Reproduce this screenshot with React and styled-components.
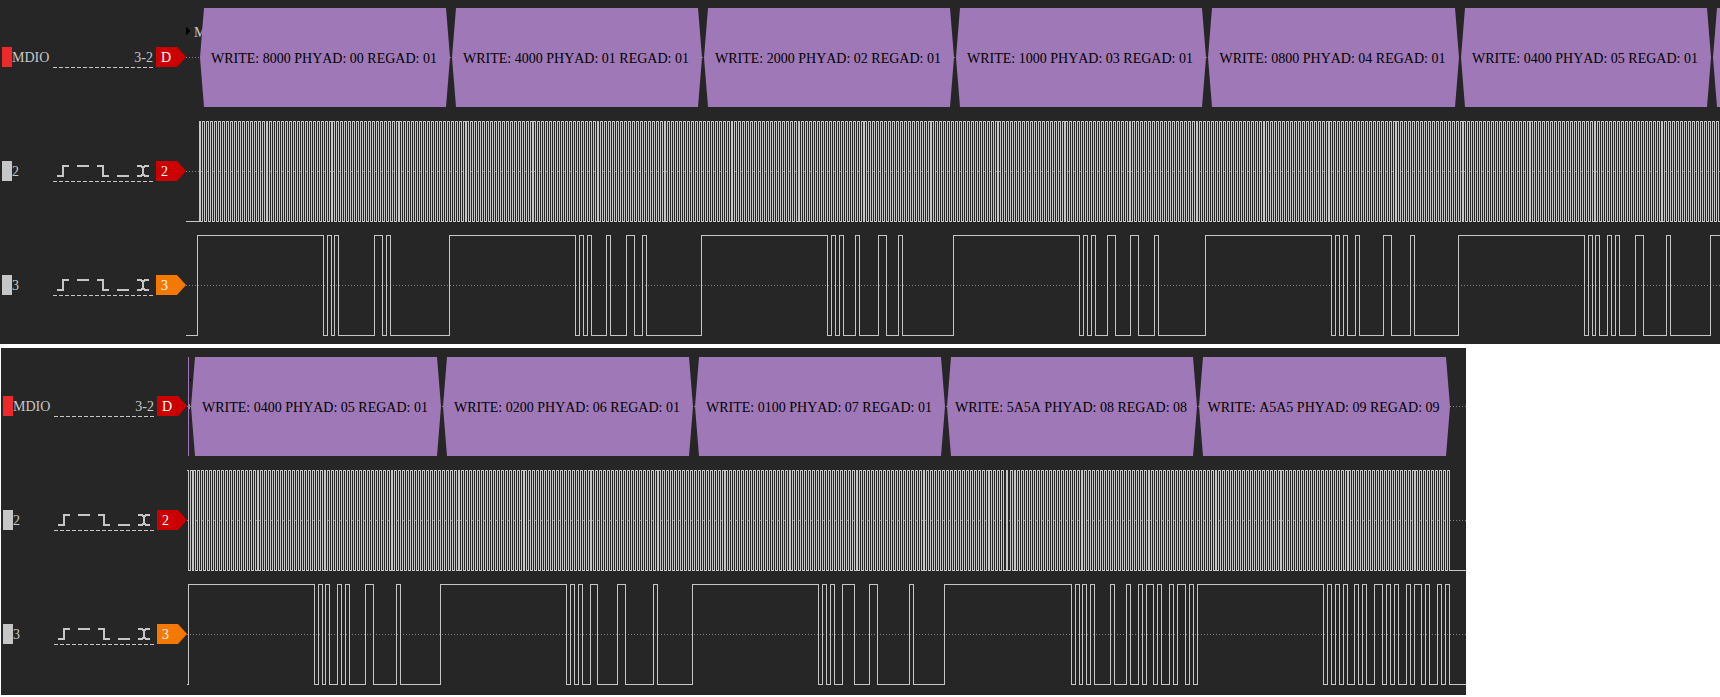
import React from "react";
import styled, { createGlobalStyle } from "styled-components";

const GlobalStyle = createGlobalStyle`
  body {
    margin: 0;
    background: #ffffff;
  }
`;

const LINE = "#c6c6c6";
const TOP = 7;
const BOTTOM = 107;
const MIDDLE = 57;

/* ---------- capture data ---------- */

// Clock edges are evenly spaced, slightly less than two pixels apart.
const EDGE_STEP = 1.97036;
const clockEdges = (start, count) =>
  Array.from({ length: count }, (_, i) => Math.floor(start + i * EDGE_STEP));

const captures = [
  {
    id: "first",
    decoder: {
      lead: 14,
      caption: "M",
      frames: [
        { text: "WRITE: 8000 PHYAD: 00 REGAD: 01", width: 252 },
        { text: "WRITE: 4000 PHYAD: 01 REGAD: 01", width: 252 },
        { text: "WRITE: 2000 PHYAD: 02 REGAD: 01", width: 252 },
        { text: "WRITE: 1000 PHYAD: 03 REGAD: 01", width: 252 },
        { text: "WRITE: 0800 PHYAD: 04 REGAD: 01", width: 253 },
        { text: "WRITE: 0400 PHYAD: 05 REGAD: 01", width: 252 },
        { text: "", width: 252 },
      ],
    },
    clock: { high: false, edges: clockEdges(13.012, 1400) },
    data: {
      high: false,
      edges: [
        11, 137, 141, 145, 148, 152, 188, 196, 200, 204, 263, 389, 393, 397,
        401, 405, 420, 424, 440, 448, 456, 460, 515, 641, 645, 649, 653, 657,
        669, 673, 692, 700, 712, 716, 767, 893, 897, 901, 905, 909, 921, 929,
        944, 952, 968, 972, 1019, 1145, 1149, 1153, 1157, 1161, 1169, 1173,
        1197, 1205, 1224, 1228, 1272, 1398, 1402, 1406, 1409, 1413, 1421,
        1425, 1429, 1433, 1449, 1457, 1480, 1484, 1524,
      ],
    },
  },
  {
    id: "second",
    decoder: {
      lead: 4,
      previousFrame: true,
      frames: [
        { text: "WRITE: 0400 PHYAD: 05 REGAD: 01", width: 252 },
        { text: "WRITE: 0200 PHYAD: 06 REGAD: 01", width: 252 },
        { text: "WRITE: 0100 PHYAD: 07 REGAD: 01", width: 252 },
        { text: "WRITE: 5A5A PHYAD: 08 REGAD: 08", width: 252 },
        { text: "WRITE: A5A5 PHYAD: 09 REGAD: 09", width: 253 },
      ],
    },
    clock: {
      high: true,
      edges: [
        1, 3,
        ...clockEdges(5.004, 413),
        819, 820, 823, 825,
        ...clockEdges(827.025, 222),
      ],
    },
    data: {
      high: false,
      edges: [
        1, 127, 131, 135, 138, 142, 150, 154, 158, 162, 178, 186, 209, 213,
        253, 379, 383, 387, 391, 395, 403, 410, 430, 438, 466, 470, 505, 631,
        635, 639, 643, 647, 655, 667, 682, 690, 722, 726, 757, 884, 888, 892,
        895, 899, 903, 907, 923, 927, 939, 943, 951, 955, 959, 966, 970, 974,
        982, 986, 990, 998, 1002, 1006, 1010, 1136, 1140, 1144, 1148, 1152,
        1156, 1160, 1167, 1171, 1175, 1179, 1187, 1195, 1199, 1203, 1207,
        1211, 1219, 1223, 1227, 1234, 1238, 1242, 1250, 1254, 1258, 1262,
      ],
    },
  },
];

/* ---------- layout ---------- */

const Page = styled.main`
  display: flex;
  flex-direction: column;
  gap: 4px;
  padding-bottom: 2px;
  font-family: "Liberation Serif", "Times New Roman", serif;
  font-size: 14px;
  line-height: 20px;
  font-kerning: none;
  color: ${LINE};
`;

const Capture = styled.section`
  background: #262626;
  padding: ${(p) => (p.$inset ? "1px 0 4px" : "0 0 2px")};
  margin: ${(p) => (p.$inset ? "0 254px 0 1px" : "0")};
`;

const Channel = styled.div`
  display: flex;
  height: 114px;
`;

const ChannelHeader = styled.header`
  flex: none;
  display: flex;
  align-items: flex-start;
  box-sizing: border-box;
  width: 186px;
  padding: 47px 0 0 2px;
`;

const Swatch = styled.span`
  width: 10px;
  height: 20px;
  background: ${(p) => p.$color};
`;

const Name = styled.span`
  width: 41px;
  padding-top: 1px;
`;

const Settings = styled.div`
  box-sizing: border-box;
  width: 100px;
  height: 21px;
  margin-right: 3px;
  background: repeating-linear-gradient(
      to right,
      ${LINE} 0 4px,
      transparent 4px 6px
    )
    bottom / 100% 1px no-repeat;
`;

const Lines = styled(Settings)`
  padding-top: 1px;
  text-align: right;
`;

const Triggers = styled(Settings)`
  display: flex;
  gap: 8px;
  padding: 4px 4px 0;
`;

const TriggerButton = styled.button`
  display: block;
  width: 12px;
  height: 12px;
  padding: 0;
  border: 0;
  background: none;
  color: ${LINE};
  cursor: pointer;

  svg {
    display: block;
  }
`;

const Tag = styled.span`
  box-sizing: border-box;
  width: 30px;
  height: 20px;
  padding: 1px 0 0 5px;
  background: ${(p) => p.$color};
  color: #ffffff;
  clip-path: polygon(0 0, 21px 0, 100% 50%, 21px 100%, 0 100%);
`;

const Track = styled.div`
  flex: 1;
  min-width: 0;
  display: grid;
  grid-template-columns: minmax(0, 1fr);
  overflow: hidden;
  position: relative;

  > * {
    grid-area: 1 / 1;
  }
`;

const Plot = styled.svg`
  display: block;
  width: 100%;
  height: 114px;
  shape-rendering: crispEdges;
`;

const Caption = styled.span`
  position: absolute;
  top: 23px;
  left: 8px;
`;

const Frames = styled.div`
  display: flex;
  gap: 2px;
  position: relative;
  padding: 8px 0 0 ${(p) => p.$lead}px;
`;

const Frame = styled.div`
  flex: none;
  box-sizing: border-box;
  width: ${(p) => p.$width - 2}px;
  height: 99px;
  padding: 41px 2px 0 0;
  background: #9f79b7;
  color: #000000;
  text-align: center;
  white-space: nowrap;
  clip-path: polygon(
    4px 0,
    calc(100% - 4px) 0,
    100% 50%,
    calc(100% - 4px) 100%,
    4px 100%,
    0 50%
  );
`;

/* ---------- drawings ---------- */

const triggerShapes = [
  { name: "Rising edge", d: "M0 11H6M6 12V0M5 1H12" },
  { name: "High level", d: "M0 1H12" },
  { name: "Falling edge", d: "M0 1H7M6 0V12M5 11H12" },
  { name: "Low level", d: "M0 11H12" },
  { name: "Any edge", d: "M0 1H4L6 3V9L4 11H0M12 1H8L6 3M6 9L8 11H12" },
];

function MiddleLine() {
  return (
    <line
      x1="0"
      x2="100%"
      y1={MIDDLE + 0.5}
      y2={MIDDLE + 0.5}
      stroke="#828282"
      strokeDasharray="1 2"
    />
  );
}

function Waveform({ high, edges, label }) {
  let level = high;
  let d = `M0 ${(level ? TOP : BOTTOM) + 0.5}`;
  edges.forEach((x) => {
    level = !level;
    d += `H${x + 0.5}V${(level ? TOP : BOTTOM) + 0.5}`;
  });
  d += "H4000";
  return (
    <Plot role="img" aria-label={label}>
      <MiddleLine />
      <path d={d} fill="none" stroke={LINE} />
    </Plot>
  );
}

function LogicChannel({ name, color, signal }) {
  return (
    <Channel>
      <ChannelHeader>
        <Swatch $color={LINE} />
        <Name>{name}</Name>
        <Triggers>
          {triggerShapes.map((shape) => (
            <TriggerButton
              key={shape.name}
              type="button"
              aria-label={`${shape.name} trigger, channel ${name}`}
            >
              <svg width="12" height="12" shapeRendering="crispEdges">
                <path
                  d={shape.d}
                  fill="none"
                  stroke="currentColor"
                  strokeWidth="2"
                />
              </svg>
            </TriggerButton>
          ))}
        </Triggers>
        <Tag $color={color}>{name}</Tag>
      </ChannelHeader>
      <Track>
        <Waveform {...signal} label={`Channel ${name} waveform`} />
      </Track>
    </Channel>
  );
}

function DecoderChannel({ lead, caption, previousFrame, frames }) {
  return (
    <Channel>
      <ChannelHeader>
        <Swatch $color="#ef2929" />
        <Name>MDIO</Name>
        <Lines>3-2</Lines>
        <Tag $color="#cc0000">D</Tag>
      </ChannelHeader>
      <Track>
        <Plot aria-hidden="true">
          <MiddleLine />
          {caption && <path d="M0 27L4 31L0 35Z" fill="#000000" />}
          {previousFrame && (
            <path d="M1 8H2V55H3V60H2V107H1Z" fill="#9f79b7" />
          )}
          {previousFrame && (
            <rect x="3" y="30" width="1" height="2" fill="#000000" />
          )}
        </Plot>
        {caption && <Caption>{caption}</Caption>}
        <Frames $lead={lead}>
          {frames.map((frame, i) => (
            <Frame key={i} $width={frame.width}>
              {frame.text}
            </Frame>
          ))}
        </Frames>
      </Track>
    </Channel>
  );
}

export default function App() {
  return (
    <Page>
      <GlobalStyle />
      {captures.map((capture, i) => (
        <Capture key={capture.id} $inset={i > 0}>
          <DecoderChannel {...capture.decoder} />
          <LogicChannel name="2" color="#cc0000" signal={capture.clock} />
          <LogicChannel name="3" color="#f57900" signal={capture.data} />
        </Capture>
      ))}
    </Page>
  );
}
